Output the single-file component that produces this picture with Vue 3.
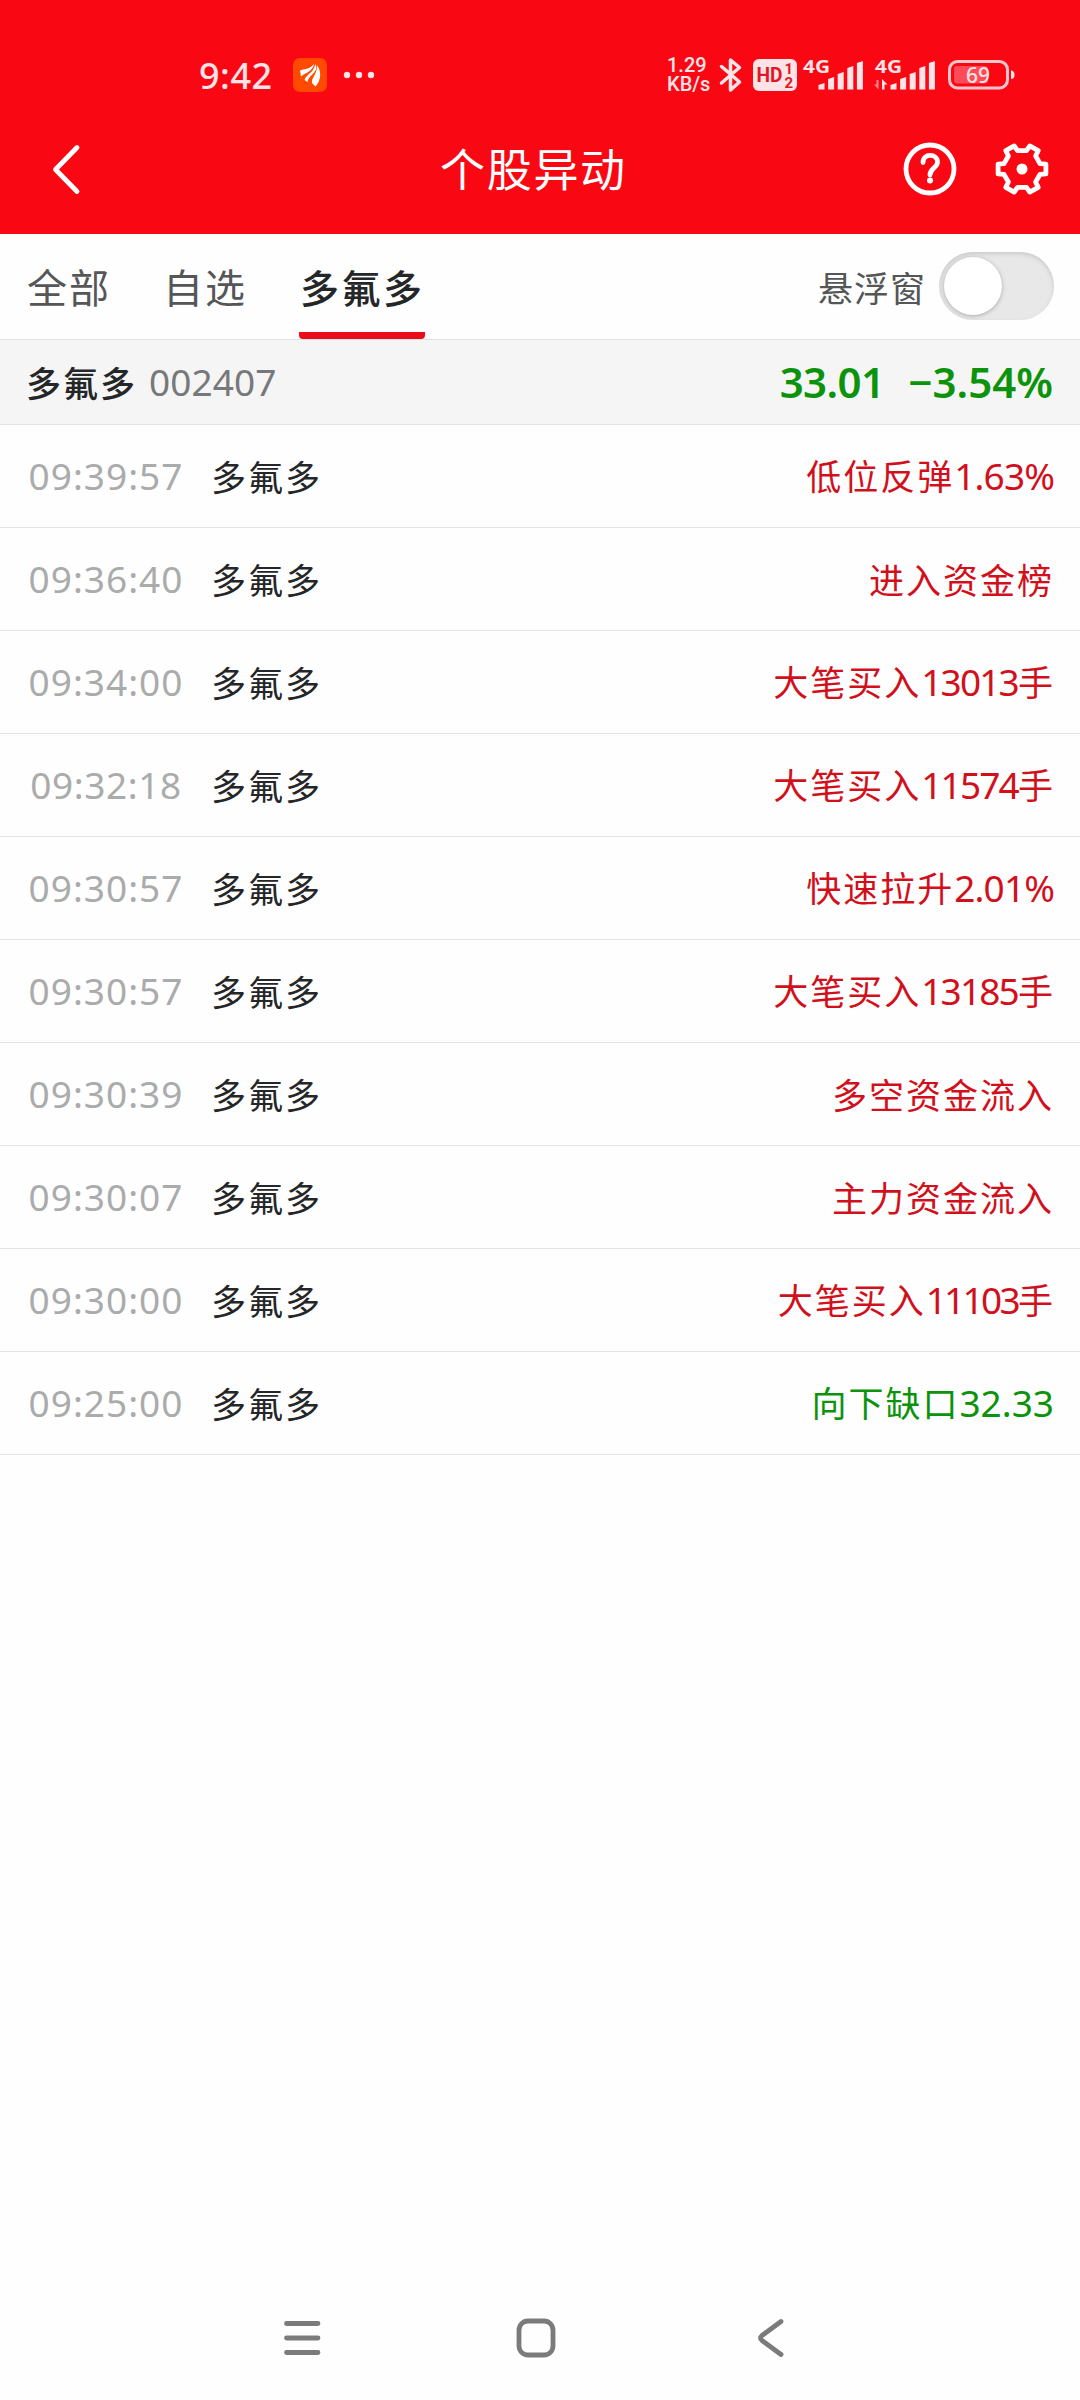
<template>
    <div class="app">
        <header class="header">
            <div class="status-bar">
                <div class="clock">9:42</div>
                <svg class="app-badge" viewBox="0 0 34 34">
                    <rect width="34" height="34" rx="7" fill="#ff4a00" />
                    <path d="M7 12.5C11 10.5 16 12 21 6C20 13 13 14.500 8 18.500Z" fill="#fff" />
                    <path d="M11.500 22C13 16 20 16 22.500 6C26 15 16 16 14.500 24Z" fill="#fff" />
                    <path d="M19 25C18 20 24.500 16 24 7C28.500 13 28.500 22 22.500 28.500Z" fill="#fff" />
                </svg>
                <svg class="dots" viewBox="0 0 32 8">
                    <circle v-for="x in [4, 16, 28]" :key="x" :cx="x" cy="4" r="3.2" fill="#ffe3e6" />
                </svg>

                <div class="net-speed">
                    <span class="speed-value">1.29</span>
                    <span class="speed-unit">KB/s</span>
                </div>
                <svg class="bluetooth" viewBox="0 0 24 36">
                    <path d="M2.500 9.500L20.500 25L11.500 33V3L20.500 10.500L2.500 26" />
                </svg>
                <svg class="hd" viewBox="0 0 44 34">
                    <rect y="1" width="44" height="32" rx="6" fill="#ffe3e6" />
                    <text x="3.500" y="24" font-size="20" textLength="26" lengthAdjust="spacingAndGlyphs">HD</text>
                    <text x="31.500" y="15.500" font-size="15">1</text>
                    <text x="31.500" y="30" font-size="15">2</text>
                </svg>
                <svg v-for="sim in sims" :key="sim.name" class="signal" :class="sim.name" viewBox="0 0 62 34">
                    <text x="1" y="15" font-size="18" textLength="27" lengthAdjust="spacingAndGlyphs">4G</text>
                    <path v-if="sim.active" d="M4.500 22V31.500L0 26.500H2.500V22Z" fill="#ff8890" />
                    <path v-if="sim.active" d="M8 31.500V21L13.500 26.500H10.500V31.500Z" />
                    <path v-for="(bar, i) in bars" :key="i"
                        :d="`M${16.500 + i * 9.600} 31.500V${bar + 2}L${22.500 + i * 9.600} ${bar}V31.500Z`" />
                </svg>
                <svg class="battery" viewBox="0 0 68 30">
                    <rect x="1.500" y="1.500" width="58" height="26.500" rx="8" fill="none" stroke="#ffc5ca"
                        stroke-width="3" />
                    <rect x="6" y="6" width="34" height="17.500" rx="3" fill="#ff4b57" />
                    <path d="M63 10.500Q66.500 10.500 66.500 15Q66.500 19 63 19Z" fill="#ffe3e6" />
                    <text x="18" y="22.500" font-size="22" textLength="24" lengthAdjust="spacingAndGlyphs">69</text>
                </svg>
            </div>

            <div class="title-bar">
                <svg class="back" viewBox="0 0 30 52">
                    <path d="M26 4.500L4.500 26.500L26 48.500" />
                </svg>
                <h1 class="title">个股异动</h1>
                <svg class="help" viewBox="0 0 54 54">
                    <circle cx="27" cy="27" r="24" />
                    <path d="M20 20.500C20 10.500 34.500 11.500 34.500 20C34.500 26 27 26 27 33" />
                    <circle class="fill" cx="27" cy="38.500" r="3" />
                </svg>
                <svg class="settings" viewBox="0 0 54 54">
                    <path d="M22.500 8.700H31.500L34.800 3.900L43.200 8.700L40.600 14L45.100 21.700L50.900 22.100V31.900L45.100 32.300L40.600 40L43.200 45.300L34.800 50.100L31.500 45.300H22.500L19.200 50.100L10.800 45.300L13.400 40L8.900 32.300L3.100 31.900V22.100L8.900 21.700L13.400 14L10.800 8.700L19.200 3.900Z" />
                    <circle class="fill" cx="27" cy="27" r="5.500" />
                </svg>
            </div>
        </header>

        <nav class="tabs">
            <div v-for="tab in tabs" :key="tab" class="tab" :class="{ active: tab === activeTab }"
                @click="activeTab = tab">
                {{ tab }}
            </div>
            <div class="float-label">悬浮窗</div>
            <div class="switch" :class="{ on: floating }" @click="floating = !floating">
                <div class="knob"></div>
            </div>
        </nav>

        <section class="stock">
            <span class="stock-name">多氟多</span>
            <span class="stock-code">002407</span>
            <span class="stock-price">33.01</span>
            <span class="stock-change">−3.54%</span>
        </section>

        <ul class="list">
            <li v-for="(item, index) in events" :key="index" class="row">
                <span class="time" :style="{ letterSpacing: tracking(item.time, 1, 0.4) }">{{ item.time }}</span>
                <span class="name">多氟多</span>
                <span class="event" :class="{ down: item.down }">
                    <span>{{ item.label }}</span><span v-if="item.value" class="num"
                        :style="{ letterSpacing: tracking(item.value, 0, 0.9) }">{{ item.value }}</span><span
                        v-if="item.unit" class="unit">{{ item.unit }}</span>
                </span>
            </li>
        </ul>

        <footer class="nav-bar">
            <svg class="nav-icon" viewBox="0 0 44 44">
                <path d="M6.500 7.500H38M6.500 22H38M6.500 36.500H38" />
            </svg>
            <svg class="nav-icon" viewBox="0 0 44 44">
                <rect x="5" y="5" width="34" height="34" rx="9" />
            </svg>
            <svg class="nav-icon" viewBox="0 0 44 44">
                <path d="M33 5.500L14 19.500Q11 22 14 24.500L33 38.500" />
            </svg>
        </footer>
    </div>
</template>

<script setup>
import { ref } from "vue";

const tabs = ["全部", "自选", "多氟多"];
const activeTab = ref("多氟多");
const floating = ref(false);

const sims = [
    { name: "sim1", active: false },
    { name: "sim2", active: true },
];
const bars = [25, 19, 14, 8, 3];

const events = [
    { time: "09:39:57", label: "低位反弹", value: "1.63%" },
    { time: "09:36:40", label: "进入资金榜" },
    { time: "09:34:00", label: "大笔买入", value: "13013", unit: "手" },
    { time: "09:32:18", label: "大笔买入", value: "11574", unit: "手" },
    { time: "09:30:57", label: "快速拉升", value: "2.01%" },
    { time: "09:30:57", label: "大笔买入", value: "13185", unit: "手" },
    { time: "09:30:39", label: "多空资金流入" },
    { time: "09:30:07", label: "主力资金流入" },
    { time: "09:30:00", label: "大笔买入", value: "11103", unit: "手" },
    { time: "09:25:00", label: "向下缺口", value: "32.33", down: true },
];

// The digit 1 is narrow, so numbers with many of them are set tighter
const tracking = (text, base, step) => {
    const ones = text.split("1").length - 1;
    return `${base - ones * step}px`;
};
</script>

<style>
body {
    margin: 0;
    background-color: #fff;
}
</style>

<style scoped>
.app {
    display: flex;
    flex-direction: column;
    width: 1080px;
    height: 2400px;
    background-color: #fefefe;
    font-family: "Noto Sans", "Noto Sans CJK SC", sans-serif;
    color: #252628;
    white-space: nowrap;
}

svg {
    display: block;
    flex: none;
    overflow: visible;
}

/* --- Header --- */
.header {
    height: 234px;
    background-color: #fa0714;
}

.status-bar {
    display: flex;
    align-items: center;
    height: 126px;
    padding: 24px 0 0 199px;
    box-sizing: border-box;
    color: #ffe3e6;
}

.clock {
    width: 94px;
    font-size: 36px;
    font-weight: 500;
    letter-spacing: 0.5px;
}

.app-badge {
    width: 34px;
    height: 34px;
}

.dots {
    width: 32px;
    height: 8px;
    margin-left: 16px;
}

.net-speed {
    display: flex;
    flex-direction: column;
    width: 52px;
    margin-left: 292px;
    font-family: Roboto, sans-serif;
    font-size: 20px;
    font-weight: 500;
    line-height: 19px;
}

.bluetooth {
    width: 24px;
    height: 36px;
    margin-top: -1px;
    fill: none;
    stroke: #ffe3e6;
    stroke-width: 3.5;
    stroke-linejoin: round;
    stroke-linecap: round;
}

.hd {
    width: 44px;
    height: 34px;
    margin-left: 10px;
    fill: #e01824;
    font-family: Roboto, sans-serif;
    font-weight: 700;
}

.signal {
    width: 62px;
    height: 34px;
    fill: #ffe3e6;
    font-weight: 700;
}

.sim1 {
    margin-left: 5px;
}

.sim2 {
    margin-left: 10px;
}

.battery {
    width: 68px;
    height: 30px;
    margin-left: 12px;
    fill: #ffe3e6;
    font-weight: 500;
}

.title-bar {
    display: flex;
    align-items: center;
    height: 85px;
    padding: 0 31px 0 51px;
}

.back {
    width: 30px;
    height: 52px;
    fill: none;
    stroke: #fff;
    stroke-width: 4.8;
    stroke-linecap: round;
    stroke-linejoin: round;
}

.title {
    margin: 2px auto 0 359px;
    font-size: 45px;
    font-weight: 400;
    line-height: 60px;
    letter-spacing: 1.7px;
    color: #fff;
}

.help,
.settings {
    width: 54px;
    height: 54px;
    fill: none;
    stroke: #fff;
    stroke-width: 4.8;
    stroke-linecap: round;
    stroke-linejoin: round;
}

.settings {
    margin-left: 38px;
}

.fill {
    fill: #fff;
    stroke: none;
}

/* --- Tabs --- */
.tabs {
    display: flex;
    align-items: center;
    height: 106px;
    padding: 0 26px 0 27px;
    box-sizing: border-box;
    border-bottom: 1px solid #e3e3e3;
}

.tab {
    height: 105px;
    margin-right: 52px;
    box-sizing: border-box;
    font-size: 40px;
    line-height: 108px;
    letter-spacing: 2px;
    color: #555658;
    cursor: pointer;
}

.tab.active {
    margin: 0 auto 0 0;
    padding-left: 1px;
    background: linear-gradient(#ea0b1b, #ea0b1b) no-repeat 0 98px / 100% 7px;
    border-radius: 0 0 4px 4px;
    font-size: 39px;
    letter-spacing: 2.5px;
    font-weight: 500;
    color: #252628;
}

.float-label {
    margin-right: 13px;
    font-size: 35px;
    letter-spacing: 1px;
    color: #555658;
}

.switch {
    display: flex;
    width: 115px;
    height: 68px;
    padding: 5px;
    margin-top: -2px;
    box-sizing: border-box;
    border-radius: 34px;
    background-color: #e8e8e8;
    box-shadow: inset 0 2px 4px #c9c9c9;
}

.switch.on {
    justify-content: flex-end;
    background-color: #ea0b1b;
}

.knob {
    width: 58px;
    height: 58px;
    border-radius: 50%;
    background-color: #fff;
    box-shadow: 0 1px 4px #aaa;
}

/* --- Current stock --- */
.stock {
    display: flex;
    align-items: center;
    height: 85px;
    padding: 0 27px 2px 26px;
    box-sizing: border-box;
    border-bottom: 1px solid #e3e3e3;
    background-color: #f5f5f5;
}

.stock-name {
    font-size: 35px;
    font-weight: 500;
    letter-spacing: 2px;
}

.stock-code {
    margin: 0 auto 0 12px;
    font-size: 37px;
    letter-spacing: 0.1px;
    color: #777879;
}

.stock-price,
.stock-change {
    font-size: 42px;
    font-weight: 600;
    color: #0c930c;
}

.stock-price {
    letter-spacing: -0.6px;
}

.stock-change {
    margin-left: 24px;
}

/* --- Event list --- */
.list {
    margin: 0;
    padding: 0;
    list-style: none;
}

.row {
    display: flex;
    align-items: center;
    height: 103px;
    padding: 0 26px 2px 27px;
    box-sizing: border-box;
    border-bottom: 1px solid #e3e3e3;
}

.time {
    width: 158px;
    font-size: 37px;
    text-align: center;
    color: #aaabab;
}

.name {
    margin-left: 26px;
    font-size: 35px;
    letter-spacing: 2px;
}

.event {
    display: flex;
    align-items: baseline;
    margin-left: auto;
    font-size: 35px;
    letter-spacing: 2px;
    color: #d2101c;
}

.event.down {
    color: #0c930c;
}

.num {
    font-size: 37px;
}

.unit {
    margin-right: -1px;
}

/* --- System navigation --- */
.nav-bar {
    display: flex;
    justify-content: space-between;
    margin: auto 288px 40px 280px;
}

.nav-icon {
    width: 44px;
    height: 44px;
    fill: none;
    stroke: #7b7b7b;
    stroke-width: 4.8;
    stroke-linecap: round;
    stroke-linejoin: round;
}
</style>
